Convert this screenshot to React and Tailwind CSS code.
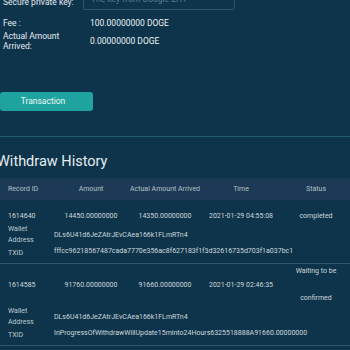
const rows = [
    {
        id: "1614640",
        amount: "14450.00000000",
        arrived: "14350.00000000",
        time: "2021-01-29 04:55:08",
        status: ["completed"],
        wallet: "DLs6U41d6JeZAtrJEvCAea166k1FLmRTn4",
        txid: "fffcc96218567487cada7770e356ac8f627183f1f3d32616735d703f1a037bc1",
    },
    {
        id: "1614585",
        amount: "91760.00000000",
        arrived: "91660.00000000",
        time: "2021-01-29 02:46:35",
        status: ["Waiting to be", "confirmed"],
        wallet: "DLs6U41d6JeZAtrJEvCAea166k1FLmRTn4",
        txid: "InProgressOfWithdrawWillUpdate15minto24Hours6325518888A91660.00000000",
    },
    {
        id: "1614580",
        amount: "1000.00000000",
        arrived: "900.00000000",
        time: "2021-01-29 02:29:15",
        status: ["completed"],
        wallet: "DLs6U41d6JeZAtrJEvCAea166k1FLmRTn4",
        txid: "",
    },
];

const cols = "grid grid-cols-[56px_70px_78px_74px_76px] items-center";

const App = () => {
    return (
        <div className="w-[350px] h-[350px] overflow-hidden bg-[#0d344b] font-['Roboto',sans-serif]">
            {/* Form */}
            <div className="-mt-[12px] flex items-end">
                <span className="w-[83px] pl-[3px] mb-[3px] text-[8.5px] leading-[10px] text-[#e3eaee]">
                    Secure private key:
                </span>
                <div className="w-[152px] h-[22px] border border-[#2b5569] rounded-[2px] flex items-center pl-[7px] text-[8.5px] text-[#5f7a8a]">
                    The key from Google 2FA
                </div>
            </div>
            <div className="mt-2 flex text-[8.5px] leading-[10px] text-[#e3eaee]">
                <span className="w-[90px] pl-[3px]">Fee :</span>
                <span className="text-[#eef3f5]">100.00000000 DOGE</span>
            </div>
            <div className="mt-[3px] flex items-center text-[8.5px] leading-[10px] text-[#e3eaee]">
                <span className="w-[90px] pl-[3px]">
                    Actual Amount
                    <br />
                    Arrived:
                </span>
                <span className="text-[#eef3f5]">0.00000000 DOGE</span>
            </div>

            <button className="mt-[41px] w-[93px] h-[19px] rounded-[3px] bg-[#1fa39e] pr-[7px] text-[8.5px] text-[#eef8f7]">
                Transaction
            </button>

            <div className="mt-[25px] h-px bg-[#1f5b70]" />

            {/* History */}
            <h2 className="mt-[15px] mb-[6px] -ml-[3px] text-[14.5px] leading-[20px] text-[#e6edf0]">
                Withdraw History
            </h2>

            <div className={`${cols} h-[22px] bg-[#1c3a55] text-[7px] text-[#b3c0c8]`}>
                <span className="pl-2">Record ID</span>
                <span className="text-center">Amount</span>
                <span className="text-center">Actual Amount Arrived</span>
                <span className="text-center">Time</span>
                <span className="text-center">Status</span>
            </div>

            <div className="pt-[9px] text-[7px] leading-[10px] text-[#cfd8dd]">
                {rows.map((row) => (
                    <div key={row.id} className="pt-[2px] pb-[5px] border-b border-[#2c5670]">
                        <div className={cols}>
                            <span className="pl-2">{row.id}</span>
                            <span className="text-center">{row.amount}</span>
                            <span className="text-center">{row.arrived}</span>
                            <span className="text-center">{row.time}</span>
                            <div className="flex flex-col gap-[17px] text-center">
                                {row.status.map((s) => (
                                    <span key={s}>{s}</span>
                                ))}
                            </div>
                        </div>
                        <div className="mt-[3px] flex items-center">
                            <span className="w-[54px] pl-2 leading-[11px] text-[#bfcbd2]">
                                Wallet
                                <br />
                                Address
                            </span>
                            <span>{row.wallet}</span>
                        </div>
                        <div className="flex h-[12px]">
                            <span className="w-[54px] pl-2 self-end text-[#bfcbd2]">TXID</span>
                            <span className="whitespace-nowrap">{row.txid}</span>
                        </div>
                    </div>
                ))}
            </div>
        </div>
    );
};

export default App;
